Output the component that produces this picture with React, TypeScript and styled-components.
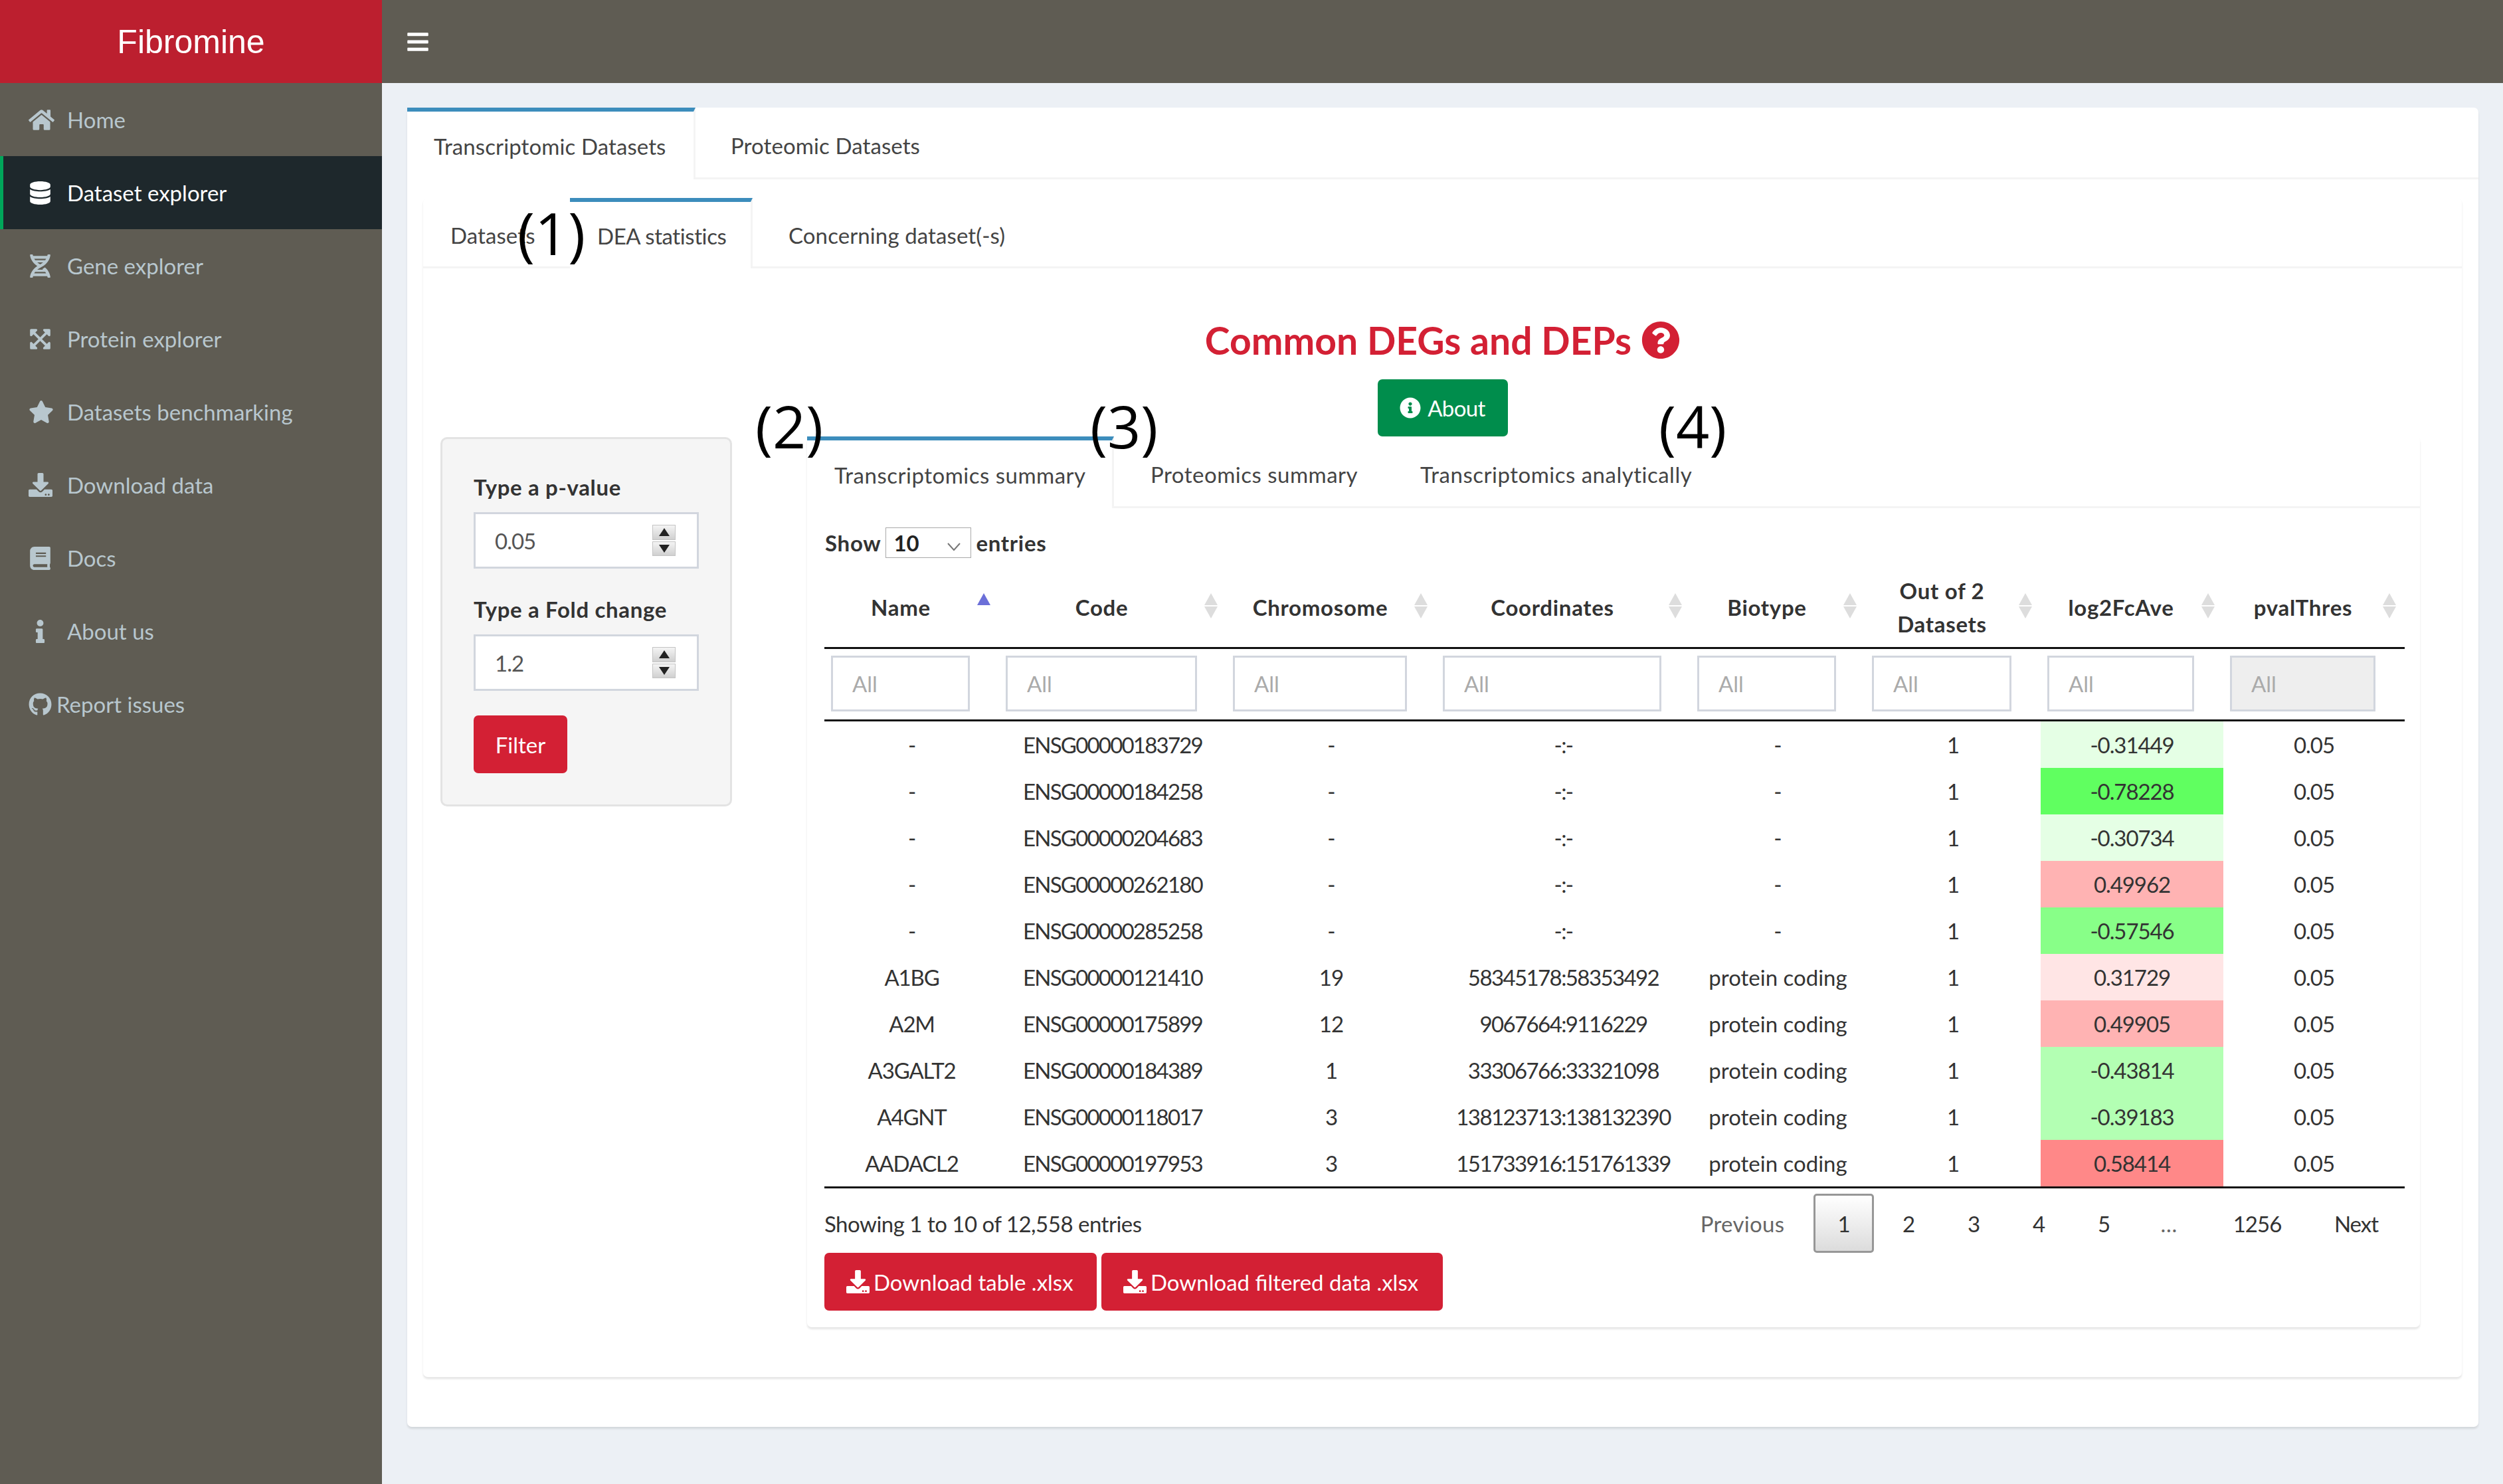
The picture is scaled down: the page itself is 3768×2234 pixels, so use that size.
import React from "react";
import styled, { createGlobalStyle } from "styled-components";
import {
    FaBars,
    FaBook,
    FaDatabase,
    FaDna,
    FaDownload,
    FaExpandArrowsAlt,
    FaGithub,
    FaHome,
    FaInfo,
    FaInfoCircle,
    FaQuestionCircle,
    FaStar,
} from "react-icons/fa";

const GlobalStyle = createGlobalStyle`
    html, body {
        margin: 0;
        padding: 0;
        background: #ecf0f5;
    }
    body {
        font-family: "Lato", "Noto Sans", sans-serif;
        font-size: 33px;
        color: #333;
        overflow: hidden;
    }
    * {
        box-sizing: border-box;
    }
`;

const Page = styled.div`
    position: relative;
    display: grid;
    grid-template-columns: 575px 1fr;
    width: 3768px;
    height: 2234px;
`;

const Sidebar = styled.aside`
    background: #5f5c53;
`;

const Logo = styled.div`
    display: flex;
    align-items: center;
    justify-content: center;
    height: 125px;
    background: #bc1f2f;
    color: #fff;
    font-family: "Liberation Sans", Arial, sans-serif;
    font-size: 50px;
`;

const MenuItem = styled.div<{ $active?: boolean }>`
    display: flex;
    align-items: center;
    height: 110px;
    padding-left: 38px;
    border-left: 5px solid ${p => (p.$active ? "#00a65a" : "transparent")};
    background: ${p => (p.$active ? "#1e282c" : "transparent")};
    color: ${p => (p.$active ? "#fff" : "#b8c7ce")};
`;

const MenuIcon = styled.span<{ $width?: number }>`
    display: flex;
    align-items: center;
    width: ${p => p.$width ?? 58}px;
    flex: none;
    font-size: 35px;
`;

const Main = styled.main`
    display: flex;
    flex-direction: column;
    min-width: 0;
`;

const Navbar = styled.header`
    display: flex;
    align-items: center;
    height: 125px;
    padding-left: 36px;
    background: #5f5c53;
    color: #fff;
    font-size: 36px;
`;

const Content = styled.section`
    padding: 37px 37px 0 38px;
`;

const TabBox = styled.div`
    background: #fff;
    border-radius: 7px;
    box-shadow: 0 3px 3px rgba(0, 0, 0, 0.1);
`;

const TabStrip = styled.div<{ $height: number; $spacing?: number }>`
    display: flex;
    height: ${p => p.$height}px;
    border-bottom: 3px solid #f4f4f4;
    letter-spacing: ${p => p.$spacing ?? 0.1}px;
`;

const Tab = styled.div<{ $active?: boolean; $width?: number; $pad: number; $tight?: boolean }>`
    display: flex;
    align-items: center;
    flex: none;
    height: ${p => (p.$active ? "calc(100% + 3px)" : "100%")};
    width: ${p => (p.$width ? `${p.$width}px` : "auto")};
    padding: 2px 0 0 ${p => p.$pad}px;
    color: #444;
    white-space: nowrap;
    background: ${p => (p.$active ? "#fff" : "transparent")};
    border-top: 6px solid ${p => (p.$active ? "#3c8dbc" : "transparent")};
    border-right: 3px solid ${p => (p.$active ? "#f4f4f4" : "transparent")};
    ${p => p.$tight && "letter-spacing: -0.4px;"}
`;

const OuterBody = styled.div`
    padding: 28px 25px 75px 24px;
`;

const InnerBody = styled.div`
    padding-bottom: 75px;
`;

const Heading = styled.div`
    display: flex;
    align-items: center;
    justify-content: center;
    gap: 15px;
    margin-top: 79px;
    height: 58px;
    color: #d32034;
    font-size: 57px;
    font-weight: 700;
`;

const AboutRow = styled.div`
    display: flex;
    justify-content: center;
    margin-top: 30px;
`;

const AboutButton = styled.div`
    display: flex;
    align-items: center;
    justify-content: center;
    gap: 10px;
    width: 196px;
    height: 86px;
    border-radius: 7px;
    background: #008d4c;
    color: #fff;
    letter-spacing: -0.6px;
`;

const Columns = styled.div`
    display: grid;
    grid-template-columns: 439px 2428px;
    column-gap: 113px;
    padding-left: 26px;
`;

const Well = styled.div`
    align-self: start;
    margin-top: 1px;
    height: 556px;
    padding: 0 47px;
    background: #f5f5f5;
    border: 3px solid #e3e3e3;
    border-radius: 10px;
`;

const FieldLabel = styled.div<{ $first?: boolean }>`
    margin-top: ${p => (p.$first ? "50px" : "39px")};
    height: 45px;
    line-height: 45px;
    font-weight: 700;
    letter-spacing: 0.65px;
    white-space: nowrap;
`;

const NumberField = styled.div`
    display: flex;
    align-items: center;
    margin-top: 15px;
    height: 85px;
    padding: 0 32px 0 29px;
    background: #fff;
    border: 3px solid #d2d6de;
`;

const NumberInput = styled.input`
    flex: 1;
    min-width: 0;
    border: 0;
    outline: 0;
    padding: 0;
    font: inherit;
    letter-spacing: -1px;
    color: #555;
    background: transparent;
`;

const Spinner = styled.div`
    display: flex;
    flex-direction: column;
    gap: 2px;
    width: 35px;
    height: 47px;
    flex: none;
`;

const SpinButton = styled.div<{ $down?: boolean }>`
    flex: 1;
    display: flex;
    align-items: center;
    justify-content: center;
    background: linear-gradient(#f4f4f4, #d0d0d0);
    border: 1px solid #c4c4c4;
    &::after {
        content: "";
        border-left: 8px solid transparent;
        border-right: 8px solid transparent;
        ${p => (p.$down ? "border-top: 12px solid #222;" : "border-bottom: 12px solid #222;")}
    }
`;

const FilterButton = styled.div`
    display: flex;
    align-items: center;
    justify-content: center;
    margin-top: 37px;
    width: 141px;
    height: 87px;
    border-radius: 7px;
    background: #d32034;
    color: #fff;
`;

const ShowRow = styled.div`
    display: flex;
    align-items: center;
    gap: 7px;
    margin: 29px 0 10px 27px;
    height: 46px;
    font-weight: 700;
    letter-spacing: 0.7px;
`;

const LengthSelect = styled.div`
    display: flex;
    align-items: center;
    justify-content: space-between;
    width: 129px;
    height: 46px;
    padding: 0 14px 0 11px;
    background: #fff;
    border: 1px solid #a9a9a9;
    color: #222;
    letter-spacing: 0;
`;

const SelectChevron = styled.svg`
    width: 22px;
    height: 14px;
    margin-top: 12px;
`;

const TableWrap = styled.div`
    width: 2378px;
    margin-left: 26px;
`;

const DataTable = styled.table`
    width: 100%;
    table-layout: fixed;
    border-collapse: separate;
    border-spacing: 0;
`;

const HeadCell = styled.th`
    height: 127px;
    padding: 3px 13px 0 0;
    border-bottom: 3px solid #111;
    font-weight: 700;
    line-height: 50px;
    letter-spacing: 0.7px;
    vertical-align: middle;
`;

const HeadInner = styled.div`
    display: flex;
    align-items: center;
`;

const HeadLabel = styled.span`
    flex: 1;
    text-align: center;
`;

const SortIcon = styled.svg`
    flex: none;
    width: 20px;
    height: 38px;
    margin-top: -3px;
`;

const FilterCell = styled.td`
    height: 109px;
    padding: 10px 44px 0 10px;
    border-bottom: 3px solid #111;
    vertical-align: top;
`;

const FilterInput = styled.input`
    display: block;
    width: 100%;
    height: 84px;
    padding: 0 0 0 29px;
    border: 3px solid #d2d6de;
    outline: 0;
    font: inherit;
    color: #555;
    background: ${p => (p.disabled ? "#eee" : "#fff")};
    &::placeholder {
        color: #aaa;
        opacity: 1;
    }
`;

const Cell = styled.td<{ $fill?: string; $spacing: number }>`
    height: 70px;
    padding: 0;
    text-align: center;
    white-space: nowrap;
    letter-spacing: ${p => p.$spacing}px;
    background: ${p => p.$fill ?? "transparent"};
`;

const TableEnd = styled.tr`
    & > td {
        height: 3px;
        padding: 0;
        background: #111;
    }
`;

const FooterRow = styled.div`
    display: flex;
    align-items: center;
    justify-content: space-between;
    margin-top: 8px;
    height: 89px;
    letter-spacing: -0.5px;
`;

const Pagination = styled.div`
    display: flex;
    align-items: center;
    height: 89px;
    padding-right: 7px;
`;

const PageButton = styled.div<{ $current?: boolean; $muted?: boolean; $width: number }>`
    display: flex;
    align-items: center;
    justify-content: center;
    width: ${p => p.$width}px;
    height: 89px;
    margin-right: ${p => (p.$current ? "3px" : "0")};
    border-radius: 5px;
    border: 3px solid ${p => (p.$current ? "#979797" : "transparent")};
    background: ${p => (p.$current ? "linear-gradient(#fff, #dcdcdc)" : "transparent")};
    color: ${p => (p.$muted ? "#666" : "#333")};
    letter-spacing: ${p => (p.$muted ? "0.3px" : "-1px")};
`;

const DownloadRow = styled.div`
    display: flex;
    gap: 7px;
    padding-bottom: 25px;
`;

const DownloadButton = styled.div<{ $width: number }>`
    display: flex;
    align-items: center;
    gap: 6px;
    width: ${p => p.$width}px;
    height: 87px;
    padding-left: 33px;
    border-radius: 7px;
    background: #d32034;
    color: #fff;
    white-space: nowrap;
`;

const Annotation = styled.div<{ $left: number; $top: number }>`
    position: absolute;
    left: ${p => p.$left}px;
    top: ${p => p.$top}px;
    font-family: "Open Sans", sans-serif;
    font-size: 88px;
    line-height: 1;
    color: #000;
`;

const SortArrows: React.FC<{ up?: boolean }> = ({ up }) => (
    <SortIcon viewBox="0 0 20 38">
        <polygon points="10,0 20,18 0,18" fill={up ? "#6b6fd8" : "#ddd"} />
        {!up && <polygon points="0,20 20,20 10,38" fill="#ddd" />}
    </SortIcon>
);

const menu = [
    { label: "Home", icon: <FaHome size={39} /> },
    { label: "Dataset explorer", icon: <FaDatabase size={35} />, active: true },
    { label: "Gene explorer", icon: <FaDna size={35} /> },
    { label: "Protein explorer", icon: <FaExpandArrowsAlt size={35} /> },
    { label: "Datasets benchmarking", icon: <FaStar size={38} /> },
    { label: "Download data", icon: <FaDownload size={36} /> },
    { label: "Docs", icon: <FaBook size={35} /> },
    { label: "About us", icon: <FaInfo size={35} /> },
    { label: "Report issues", icon: <FaGithub size={35} />, width: 42 },
];

const columns = [
    { label: <>Name</>, width: 263, up: true },
    { label: <>Code</>, width: 342 },
    { label: <>Chromosome</>, width: 316 },
    { label: <>Coordinates</>, width: 383 },
    { label: <>Biotype</>, width: 263 },
    { label: <>Out of 2<br />Datasets</>, width: 264 },
    { label: <>log2FcAve</>, width: 275 },
    { label: <>pvalThres</>, width: 273 },
];

// digits in this font run wider than the reference, so each column gets its own tracking
const cellSpacing = [-1.2, -1.8, -1, -1.6, 0, -1, -1.1, -1];

const rows = [
    ["-", "ENSG00000183729", "-", "-:-", "-", "1", "-0.31449", "#e5ffe5"],
    ["-", "ENSG00000184258", "-", "-:-", "-", "1", "-0.78228", "#60ff60"],
    ["-", "ENSG00000204683", "-", "-:-", "-", "1", "-0.30734", "#e5ffe5"],
    ["-", "ENSG00000262180", "-", "-:-", "-", "1", "0.49962", "#ffb3b3"],
    ["-", "ENSG00000285258", "-", "-:-", "-", "1", "-0.57546", "#88ff88"],
    ["A1BG", "ENSG00000121410", "19", "58345178:58353492", "protein coding", "1", "0.31729", "#ffe5e5"],
    ["A2M", "ENSG00000175899", "12", "9067664:9116229", "protein coding", "1", "0.49905", "#ffb3b3"],
    ["A3GALT2", "ENSG00000184389", "1", "33306766:33321098", "protein coding", "1", "-0.43814", "#b3ffb3"],
    ["A4GNT", "ENSG00000118017", "3", "138123713:138132390", "protein coding", "1", "-0.39183", "#b3ffb3"],
    ["AADACL2", "ENSG00000197953", "3", "151733916:151761339", "protein coding", "1", "0.58414", "#ff8888"],
];

const pages = [
    { label: "Previous", width: 214, muted: true },
    { label: "1", width: 91, current: true },
    { label: "2", width: 98 },
    { label: "3", width: 98 },
    { label: "4", width: 98 },
    { label: "5", width: 98 },
    { label: "…", width: 98, muted: true },
    { label: "1256", width: 168 },
    { label: "Next", width: 130 },
];

const Spin: React.FC = () => (
    <Spinner>
        <SpinButton />
        <SpinButton $down />
    </Spinner>
);

export default function App() {
    return (
        <Page>
            <GlobalStyle />
            <Sidebar>
                <Logo>Fibromine</Logo>
                {menu.map(item => (
                    <MenuItem key={item.label} $active={item.active}>
                        <MenuIcon $width={item.width}>{item.icon}</MenuIcon>
                        {item.label}
                    </MenuItem>
                ))}
            </Sidebar>
            <Main>
                <Navbar>
                    <FaBars />
                </Navbar>
                <Content>
                    <TabBox>
                        <TabStrip $height={108}>
                            <Tab $active $width={434} $pad={40}>Transcriptomic Datasets</Tab>
                            <Tab $pad={53}>Proteomic Datasets</Tab>
                        </TabStrip>
                        <OuterBody>
                            <TabBox>
                                <TabStrip $height={106}>
                                    <Tab $width={221} $pad={41}>Datasets</Tab>
                                    <Tab $active $tight $width={275} $pad={41}>DEA statistics</Tab>
                                    <Tab $pad={54}>Concerning dataset(-s)</Tab>
                                </TabStrip>
                                <InnerBody>
                                    <Heading>
                                        Common DEGs and DEPs
                                        <FaQuestionCircle size={58} />
                                    </Heading>
                                    <AboutRow>
                                        <AboutButton>
                                            <FaInfoCircle size={32} />
                                            About
                                        </AboutButton>
                                    </AboutRow>
                                    <Columns>
                                        <Well>
                                            <FieldLabel $first>Type a p-value</FieldLabel>
                                            <NumberField>
                                                <NumberInput readOnly defaultValue="0.05" />
                                                <Spin />
                                            </NumberField>
                                            <FieldLabel>Type a Fold change</FieldLabel>
                                            <NumberField>
                                                <NumberInput readOnly defaultValue="1.2" />
                                                <Spin />
                                            </NumberField>
                                            <FilterButton>Filter</FilterButton>
                                        </Well>
                                        <TabBox>
                                            <TabStrip $height={108} $spacing={0.5}>
                                                <Tab $active $width={462} $pad={41}>Transcriptomics summary</Tab>
                                                <Tab $width={406} $pad={55}>Proteomics summary</Tab>
                                                <Tab $pad={55}>Transcriptomics analytically</Tab>
                                            </TabStrip>
                                            <ShowRow>
                                                Show
                                                <LengthSelect>
                                                    10
                                                    <SelectChevron viewBox="0 0 22 14">
                                                        <path d="M2 2 L11 12 L20 2" fill="none" stroke="#777" strokeWidth="2" />
                                                    </SelectChevron>
                                                </LengthSelect>
                                                entries
                                            </ShowRow>
                                            <TableWrap>
                                                <DataTable>
                                                    <colgroup>
                                                        {columns.map((c, i) => (
                                                            <col key={i} style={{ width: c.width }} />
                                                        ))}
                                                    </colgroup>
                                                    <thead>
                                                        <tr>
                                                            {columns.map((c, i) => (
                                                                <HeadCell key={i}>
                                                                    <HeadInner>
                                                                        <HeadLabel>{c.label}</HeadLabel>
                                                                        <SortArrows up={c.up} />
                                                                    </HeadInner>
                                                                </HeadCell>
                                                            ))}
                                                        </tr>
                                                        <tr>
                                                            {columns.map((c, i) => (
                                                                <FilterCell key={i}>
                                                                    <FilterInput placeholder="All" disabled={i === 7} />
                                                                </FilterCell>
                                                            ))}
                                                        </tr>
                                                    </thead>
                                                    <tbody>
                                                        {rows.map(r => (
                                                            <tr key={r[1]}>
                                                                {r.slice(0, 6).map((v, i) => (
                                                                    <Cell key={i} $spacing={cellSpacing[i]}>{v}</Cell>
                                                                ))}
                                                                <Cell $fill={r[7]} $spacing={cellSpacing[6]}>{r[6]}</Cell>
                                                                <Cell $spacing={cellSpacing[7]}>0.05</Cell>
                                                            </tr>
                                                        ))}
                                                        <TableEnd>
                                                            <td colSpan={8} />
                                                        </TableEnd>
                                                    </tbody>
                                                </DataTable>
                                                <FooterRow>
                                                    Showing 1 to 10 of 12,558 entries
                                                    <Pagination>
                                                        {pages.map(p => (
                                                            <PageButton
                                                                key={p.label}
                                                                $width={p.width}
                                                                $current={p.current}
                                                                $muted={p.muted}
                                                            >
                                                                {p.label}
                                                            </PageButton>
                                                        ))}
                                                    </Pagination>
                                                </FooterRow>
                                                <DownloadRow>
                                                    <DownloadButton $width={410}>
                                                        <FaDownload size={35} />
                                                        Download table .xlsx
                                                    </DownloadButton>
                                                    <DownloadButton $width={514}>
                                                        <FaDownload size={35} />
                                                        Download filtered data .xlsx
                                                    </DownloadButton>
                                                </DownloadRow>
                                            </TableWrap>
                                        </TabBox>
                                    </Columns>
                                </InnerBody>
                            </TabBox>
                        </OuterBody>
                    </TabBox>
                </Content>
            </Main>
            <Annotation $left={779} $top={306}>(1)</Annotation>
            <Annotation $left={1137} $top={597}>(2)</Annotation>
            <Annotation $left={1641} $top={597}>(3)</Annotation>
            <Annotation $left={2497} $top={597}>(4)</Annotation>
        </Page>
    );
}
